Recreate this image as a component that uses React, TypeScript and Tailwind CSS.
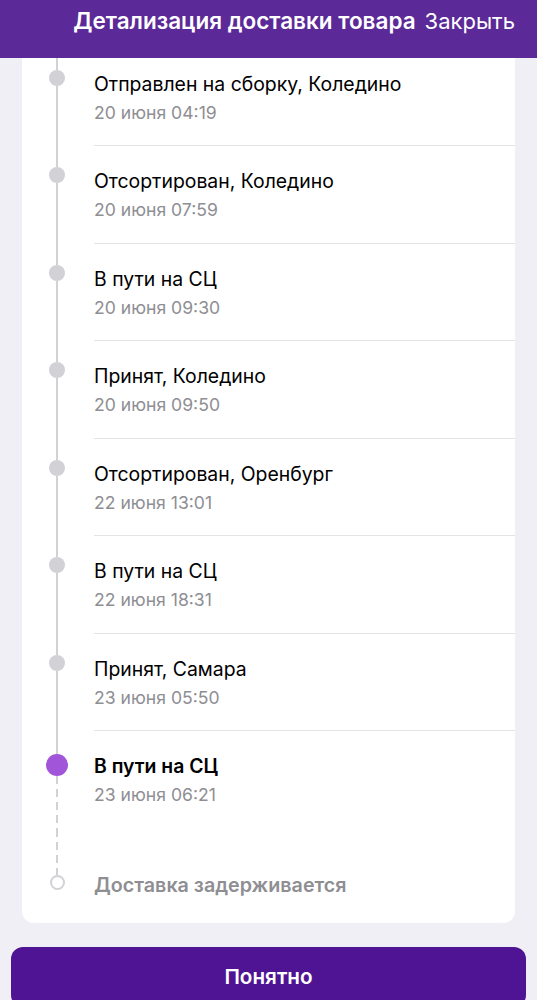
const steps = [
  { title: 'Отправлен на сборку, Коледино', date: '20 июня 04:19' },
  { title: 'Отсортирован, Коледино', date: '20 июня 07:59' },
  { title: 'В пути на СЦ', date: '20 июня 09:30' },
  { title: 'Принят, Коледино', date: '20 июня 09:50' },
  { title: 'Отсортирован, Оренбург', date: '22 июня 13:01' },
  { title: 'В пути на СЦ', date: '22 июня 18:31' },
  { title: 'Принят, Самара', date: '23 июня 05:50' },
]

const dashed =
  'w-[2px] bg-[repeating-linear-gradient(to_bottom,#d1d1d6_0_8px,transparent_8px_13px)]'

function DoneRow({ title, date }: { title: string; date: string }) {
  return (
    <div className="flex h-[97.5px]">
      <div className="flex w-[72px] flex-col items-center pr-[2px]">
        <div className="h-[21px] w-[2px] bg-[#d1d1d6]" />
        <div className="h-4 w-4 rounded-full bg-[#d1d1d6]" />
        <div className="w-[2px] flex-1 bg-[#d1d1d6]" />
      </div>
      <div className="flex-1 border-b border-[#e3e3e8] pt-[22px]">
        <div className="text-[19.4px] leading-[26px] text-black">{title}</div>
        <div className="mt-[4px] text-[17.6px] leading-[24px] text-[#8e8e93]">{date}</div>
      </div>
    </div>
  )
}

export default function App() {
  return (
    <div className="flex h-[1000px] flex-col overflow-hidden bg-[#f0eff5] font-['Inter',sans-serif]">
      <div className="relative z-10 flex h-[58px] shrink-0 items-start justify-end gap-[9px] bg-[#5b2a98] pr-[22px] pt-[7px] text-white">
        <span className="text-[22.5px] font-semibold leading-[28px]">Детализация доставки товара</span>
        <span className="text-[22px] leading-[28px]">Закрыть</span>
      </div>

      <div className="mx-[22px] -mt-[9.5px] rounded-b-[12px] bg-white">
        {steps.map((s, i) => (
          <DoneRow key={i} title={s.title} date={s.date} />
        ))}

        <div className="flex h-[97.5px]">
          <div className="flex w-[72px] flex-col items-center pr-[2px]">
            <div className="h-[23px] w-[2px] bg-[#d1d1d6]" />
            <div className="h-[22px] w-[22px] rounded-full bg-[#a155d9]" />
            <div className={`flex-1 ${dashed}`} />
          </div>
          <div className="flex-1 pt-[22px]">
            <div className="text-[19.4px] font-semibold leading-[26px] text-black">В пути на СЦ</div>
            <div className="mt-[4px] text-[17.6px] leading-[24px] text-[#8e8e93]">23 июня 06:21</div>
          </div>
        </div>

        <div className="flex h-[94.5px]">
          <div className="flex w-[72px] flex-col items-center pr-[2px]">
            <div className={`h-[46px] ${dashed}`} />
            <div className="h-[15px] w-[15px] rounded-full border-2 border-[#d1d1d6] bg-white" />
          </div>
          <div className="flex-1 pt-[43px]">
            <div className="text-[19.7px] font-semibold leading-[26px] text-[#8e8e93]">Доставка задерживается</div>
          </div>
        </div>
      </div>

      <button className="mx-[11px] mt-[24px] h-[60px] shrink-0 rounded-[12px] bg-[#4f1493] text-[20.7px] font-semibold text-white">
        Понятно
      </button>
    </div>
  )
}
